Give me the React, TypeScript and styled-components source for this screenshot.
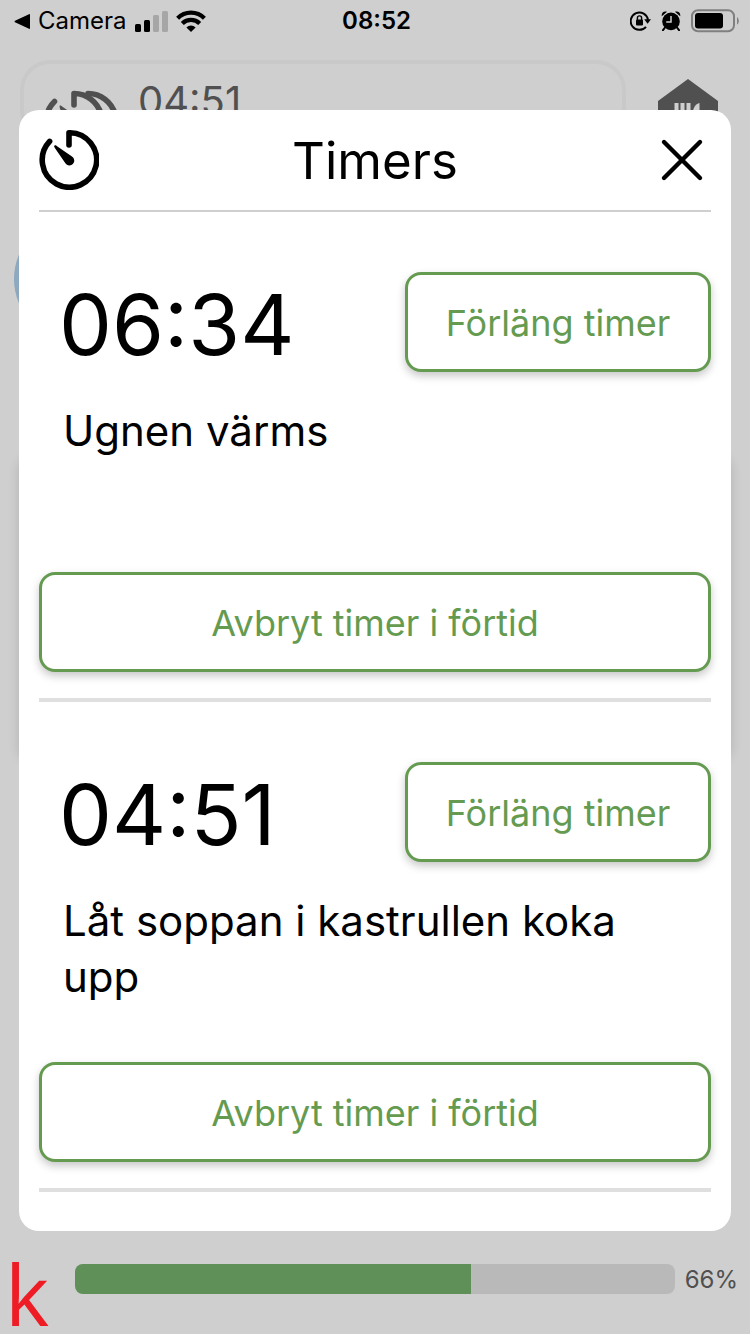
import React from 'react';
import styled, { createGlobalStyle } from 'styled-components';

const GlobalStyle = createGlobalStyle`
  * { box-sizing: border-box; }
  body {
    margin: 0;
    background: #cfcfcf;
    font-family: Inter, "Liberation Sans", sans-serif;
    color: #000;
  }
  h1, h2, p { margin: 0; font-weight: 400; }
  svg { display: block; flex: none; }
`;

const Page = styled.div`
  position: relative;
  display: flex;
  flex-direction: column;
  min-height: 100vh;
`;

const StatusBar = styled.div`
  display: grid;
  grid-template-columns: 1fr auto 1fr;
  align-items: center;
  height: 40px;
  padding: 0 11px 0 14px;
  font-size: 24px;
  line-height: 42px;
`;

const StatusGroup = styled.div<{ $end?: boolean }>`
  display: flex;
  align-items: center;
  gap: ${(p) => (p.$end ? '10px' : '8px')};
  justify-content: ${(p) => (p.$end ? 'flex-end' : 'flex-start')};
`;

const Clock = styled.time`
  font-weight: 600;
`;

const TopBar = styled.header`
  display: flex;
  align-items: flex-start;
  justify-content: space-between;
  padding: 20px 32px 0 20px;
`;

const TimerSummary = styled.div`
  display: flex;
  align-items: flex-start;
  flex: 1;
  gap: 18px;
  height: 80px;
  margin-right: 32px;
  padding: 14px 20px;
  border: 4px solid #c9c9c9;
  border-radius: 30px;
  color: #505050;
  font-size: 40px;
  line-height: 46px;
`;

const HomeLink = styled.a`
  padding-top: 19px;
`;

const Recipe = styled.main`
  padding: 76px 19px 0 14px;
`;

const StepDot = styled.div`
  width: 124px;
  height: 124px;
  border-radius: 50%;
  background: #8da9c0;
`;

const StepCard = styled.div`
  height: 300px;
  margin: 116px 0 0 5px;
  border-radius: 10px;
  box-shadow: 0 2px 12px rgba(0, 0, 0, 0.14);
`;

const Footer = styled.footer`
  display: flex;
  align-items: center;
  height: 110px;
  margin-top: auto;
  padding: 0 12px 0 5px;
  color: #505050;
  font-size: 24px;
`;

const Brand = styled.div`
  width: 70px;
  padding-top: 30px;
  color: #ee1c25;
  font-family: "Open Sans", "Noto Sans", sans-serif;
  font-size: 84px;
  line-height: 80px;
`;

const Track = styled.div`
  flex: 1;
  height: 30px;
  margin-right: 10px;
  border-radius: 8px;
  background: #b9b9b9;
  overflow: hidden;
`;

const Fill = styled.div`
  height: 100%;
  background: #5f9058;
`;

const Dialog = styled.section`
  position: absolute;
  top: 110px;
  left: 19px;
  right: 19px;
  padding: 0 20px 39px;
  border-radius: 20px;
  background: #fff;
`;

const DialogHeader = styled.div`
  display: flex;
  align-items: center;
  justify-content: space-between;
  height: 102px;
  border-bottom: 2px solid #cfcfcf;
`;

const Title = styled.h1`
  padding-top: 2px;
  font-size: 51px;
  line-height: 64px;
`;

const CloseButton = styled.button`
  width: 60px;
  height: 60px;
  padding: 0;
  border: 0;
  background: none;
`;

const TimerItem = styled.article`
  padding: 60px 0 26px;
  border-bottom: 4px solid #dfdfdf;
`;

const TimerRow = styled.div`
  display: flex;
  align-items: center;
  justify-content: space-between;
  padding-left: 20px;
`;

const TimeLeft = styled.h2`
  padding-top: 6px;
  font-size: 84px;
  line-height: 94px;
`;

const Description = styled.p`
  min-height: 112px;
  margin: 31px 24px 57px;
  font-size: 42px;
  line-height: 56px;
`;

const OutlineButton = styled.button<{ $wide?: boolean }>`
  width: ${(p) => (p.$wide ? '100%' : '306px')};
  height: 100px;
  padding: 2px 0 0;
  border: 3px solid #659b50;
  border-radius: 16px;
  background: #fff;
  color: #659b50;
  box-shadow: 0 4px 8px rgba(0, 0, 0, 0.22);
  font-family: inherit;
  font-size: 36px;
`;

const SignalIcon = () => (
  <svg width="33" height="21" viewBox="0 0 33 21">
    <rect x="0" y="13" width="6" height="8" rx="1.5" />
    <rect x="9" y="9" width="6" height="12" rx="1.5" />
    <rect x="18" y="4" width="6" height="17" rx="1.5" fill="#a6a6a6" />
    <rect x="27" y="0" width="6" height="21" rx="1.5" fill="#a6a6a6" />
  </svg>
);

const WifiIcon = () => (
  <svg width="30" height="22" viewBox="0 0 30 22" fill="none" stroke="#000" strokeWidth="4.2">
    <path d="M1.6 8.2a19 19 0 0 1 26.8 0" />
    <path d="M6.3 13.4a12.4 12.4 0 0 1 17.4 0" />
    <path d="M10.4 17.4a6.6 6.6 0 0 1 9.2 0L15 22z" fill="#000" stroke="none" />
  </svg>
);

const RotationLockIcon = () => (
  <svg width="21" height="20" viewBox="0 0 21 20">
    <path d="M16 15.8A8.7 8.7 0 1 1 18 8.8" fill="none" stroke="#000" strokeWidth="2" />
    <path d="M14.2 8.2h6.8L17.600 12.800z" />
    <rect x="6" y="8.4" width="7" height="6" rx="1" />
    <path d="M7.4 9V7a2.100 2.100 0 0 1 4.200 0V9" fill="none" stroke="#000" strokeWidth="1.4" />
  </svg>
);

const AlarmIcon = () => (
  <svg width="20" height="20" viewBox="0 0 20 20">
    <circle cx="10" cy="10.4" r="8.8" />
    <path d="M.8 5.2C.2 2 2.8-.4 6 .8zM19.2 5.2C19.8 2 17.2-.4 14 .8z" />
    <path d="M4 16.5l-2 2.7M16 16.5l2 2.7" stroke="#000" strokeWidth="2" strokeLinecap="round" />
    <path d="M10 5v6H5.2" fill="none" stroke="#cfcfcf" strokeWidth="1.5" />
  </svg>
);

const BatteryIcon = () => (
  <svg width="48" height="24" viewBox="0 0 48 24">
    <rect x="1" y="1.2" width="42" height="21" rx="6" fill="none" stroke="#808080" strokeWidth="2" />
    <rect x="4" y="4" width="28" height="15.4" rx="3" />
    <path d="M46 8c2.4 1.8 2.4 6 0 7.6z" fill="#808080" />
  </svg>
);

const TimerIcon = () => (
  <svg width="60" height="60" viewBox="0 0 60 60">
    <path
      d="M10.6 11.4A27.2 27.2 0 1 0 30 2.8V15"
      fill="none"
      stroke="#000"
      strokeWidth="5.6"
      strokeLinecap="round"
      strokeLinejoin="round"
    />
    <path d="M15.6 15.6c1-1 1.8 0 2.8.8l14.6 10.2a4.8 4.8 0 1 1-6.6 6.6L16.2 18.4c-.8-1.2-1.6-2-.6-2.8z" />
  </svg>
);

const TimersIcon = () => (
  <svg width="76" height="60" viewBox="0 0 76 60">
    <g fill="none" stroke="#505050" strokeWidth="5.6" strokeLinecap="round" strokeLinejoin="round">
      <path d="M10.5 23.5A28 28 0 0 0 30 71.5" />
      <path d="M30 27V15.5A28 28 0 0 1 57 36" />
      <path d="M44 15.5A28 28 0 0 1 71 36" />
    </g>
    <path d="M15.5 28c1-1 2 0 3 .8L33 39a5 5 0 1 1-7 7L16 31z" fill="#505050" />
  </svg>
);

const HomeIcon = () => (
  <svg width="60" height="62" viewBox="0 0 60 62">
    <path d="M30 0l30 22v38H0V22z" fill="#505050" />
    <path d="M16.5 24h4v10h2V24h4v10h2V24h4v15a8 8 0 0 1-16 0zM41.5 24v28H38V40h-4c0-8 2-15 7.5-16z" fill="#cfcfcf" />
  </svg>
);

const CloseIcon = () => (
  <svg width="60" height="60" viewBox="0 0 60 60" stroke="#000" strokeWidth="4.4" strokeLinecap="round">
    <path d="M13 12l36 36M49 12L13 48" />
  </svg>
);

const timers = [
  { time: '06:34', text: 'Ugnen värms' },
  { time: '04:51', text: 'Låt soppan i kastrullen koka upp' },
];

const progress = 66;

export default function App() {
  return (
    <Page>
      <GlobalStyle />
      <StatusBar>
        <StatusGroup>
          <svg width="16" height="15" viewBox="0 0 16 15">
            <path d="M16 1v13.2a.7.7 0 0 1-1 .6L1 8.2a.8.8 0 0 1 0-1.4L15 .2a.7.7 0 0 1 1 .8z" />
          </svg>
          <span>Camera</span>
          <SignalIcon />
          <WifiIcon />
        </StatusGroup>
        <Clock>08:52</Clock>
        <StatusGroup $end>
          <RotationLockIcon />
          <AlarmIcon />
          <BatteryIcon />
        </StatusGroup>
      </StatusBar>
      <TopBar>
        <TimerSummary>
          <TimersIcon />
          <span>04:51</span>
        </TimerSummary>
        <HomeLink href="#" aria-label="Hem">
          <HomeIcon />
        </HomeLink>
      </TopBar>
      <Recipe>
        <StepDot />
        <StepCard />
      </Recipe>
      <Footer>
        <Brand>k</Brand>
        <Track role="progressbar" aria-label="Framsteg" aria-valuenow={progress} aria-valuemin={0} aria-valuemax={100}>
          <Fill style={{ width: `${progress}%` }} />
        </Track>
        <span>{progress}%</span>
      </Footer>
      <Dialog role="dialog" aria-labelledby="timers-title">
        <DialogHeader>
          <TimerIcon />
          <Title id="timers-title">Timers</Title>
          <CloseButton type="button" aria-label="Stäng">
            <CloseIcon />
          </CloseButton>
        </DialogHeader>
        {timers.map((t) => (
          <TimerItem key={t.time}>
            <TimerRow>
              <TimeLeft>{t.time}</TimeLeft>
              <OutlineButton type="button">Förläng timer</OutlineButton>
            </TimerRow>
            <Description>{t.text}</Description>
            <OutlineButton type="button" $wide>
              Avbryt timer i förtid
            </OutlineButton>
          </TimerItem>
        ))}
      </Dialog>
    </Page>
  );
}
